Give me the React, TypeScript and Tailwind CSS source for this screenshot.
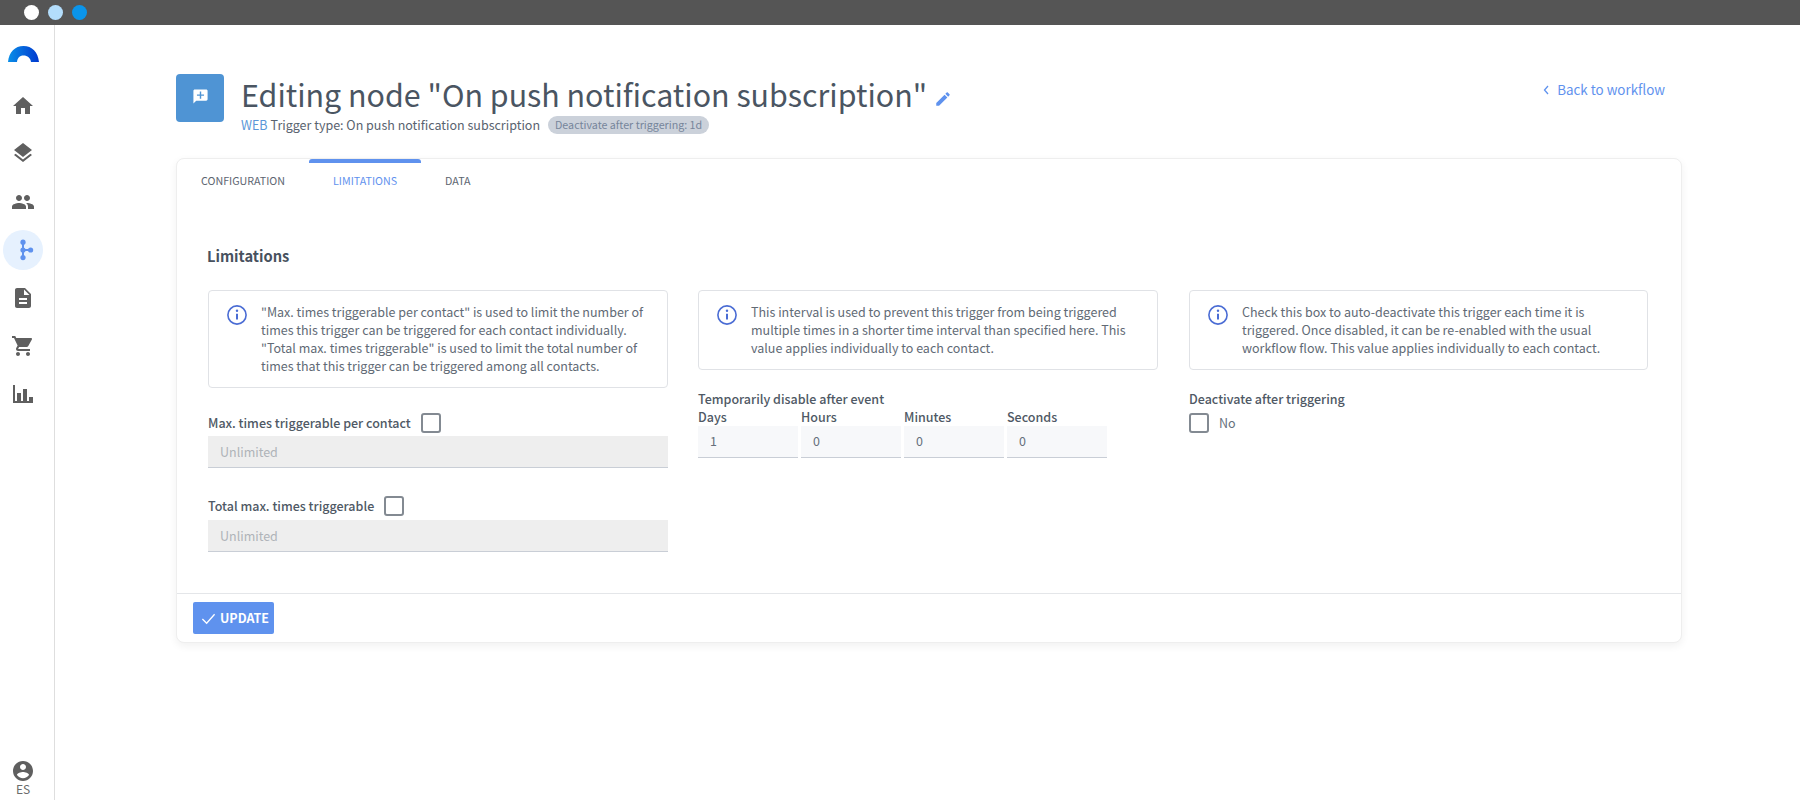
import React from "react";

const Icon = ({ d, className }: { d: string; className: string }) => (
  <svg viewBox="0 0 24 24" className={className} fill="currentColor">
    <path d={d} />
  </svg>
);

const icons = {
  home: "M10 20v-6h4v6h5v-8h3L12 3 2 12h3v8z",
  layers: "M11.99 18.54l-7.37-5.73L3 14.07l9 7 9-7-1.63-1.27-7.38 5.74zM12 16l7.36-5.73L21 9l-9-7-9 7 1.63 1.27L12 16z",
  people: "M16 11c1.66 0 2.99-1.34 2.99-3S17.66 5 16 5c-1.66 0-3 1.34-3 3s1.34 3 3 3zm-8 0c1.66 0 2.99-1.34 2.99-3S9.66 5 8 5C6.34 5 5 6.34 5 8s1.34 3 3 3zm0 2c-2.33 0-7 1.17-7 3.5V19h14v-2.5c0-2.33-4.67-3.5-7-3.5zm8 0c-.29 0-.62.02-.97.05 1.16.84 1.97 1.97 1.97 3.45V19h6v-2.5c0-2.33-4.67-3.5-7-3.5z",
  doc: "M14 2H6c-1.1 0-1.99.9-1.99 2L4 20c0 1.1.89 2 1.99 2H18c1.1 0 2-.9 2-2V8l-6-6zm2 16H8v-2h8v2zm0-4H8v-2h8v2zm-3-5V3.5L18.5 9H13z",
  cart: "M7 18c-1.1 0-1.99.9-1.99 2S5.9 22 7 22s2-.9 2-2-.9-2-2-2zM1 2v2h2l3.6 7.59-1.35 2.45c-.16.28-.25.61-.25.96 0 1.1.9 2 2 2h12v-2H7.42c-.14 0-.25-.11-.25-.25l.03-.12.9-1.63h7.45c.75 0 1.41-.41 1.75-1.03l3.58-6.49c.08-.14.12-.31.12-.48 0-.55-.45-1-1-1H5.21l-.94-2H1zm16 16c-1.1 0-1.99.9-1.99 2s.89 2 1.99 2 2-.9 2-2-.9-2-2-2z",
  chart: "M2 3h2v16h2v-8h4v8h2V7h4v12h2v-4h4v6H2z",
  account: "M12 2C6.48 2 2 6.48 2 12s4.48 10 10 10 10-4.48 10-10S17.52 2 12 2zm0 3c1.66 0 3 1.34 3 3s-1.34 3-3 3-3-1.34-3-3 1.34-3 3-3zm0 14.2c-2.5 0-4.71-1.28-6-3.22.03-1.99 4-3.08 6-3.08 1.99 0 5.97 1.09 6 3.08-1.29 1.94-3.5 3.22-6 3.22z",
  pencil: "M3 17.25V21h3.75L17.81 9.94l-3.75-3.75L3 17.25zM20.71 7.04c.39-.39.39-1.02 0-1.41l-2.34-2.34c-.39-.39-1.02-.39-1.41 0l-1.83 1.83 3.75 3.75 1.83-1.83z",
  comment: "M20 2H4c-1.1 0-2 .9-2 2v18l4-4h14c1.1 0 2-.9 2-2V4c0-1.1-.9-2-2-2zm-3 9h-4v4h-2v-4H7V9h4V5h2v4h4v2z",
};

const Info = ({ text, tall }: { text: string[]; tall?: boolean }) => (
  <div className={`flex border border-[#e0e2e6] rounded-[4px] pl-[18px] pr-2 pt-3 ${tall ? "h-[98px]" : "h-[80px]"}`}>
    <svg viewBox="0 0 20 20" className="w-5 h-5 mt-[2px] shrink-0 text-[#4a6cd4]" fill="none" stroke="currentColor" strokeWidth="1.6">
      <circle cx="10" cy="10" r="9.1" />
      <path d="M10 8.8v5.6" strokeWidth="2" />
      <circle cx="10" cy="5.8" r="1.2" fill="currentColor" stroke="none" />
    </svg>
    <div className="ml-[14px] text-[12.5px] leading-[18px] text-[#616a75] whitespace-nowrap">
      {text.map((t) => (
        <div key={t}>{t}</div>
      ))}
    </div>
  </div>
);

const Check = () => <span className="block w-5 h-5 border-2 border-[#838a92] rounded-[3px] bg-white shrink-0" />;

const Disabled = () => (
  <div className="h-8 bg-[#eeeeee] border-b border-[#c9ced6] pl-3 pt-[2px] flex items-center text-[12.5px] text-[#afb3b8]">Unlimited</div>
);

const Time = ({ label, value }: { label: string; value: string }) => (
  <div className="w-[100px]">
    <div className="h-[18px] leading-[18px] text-[12.5px] font-medium text-[#4f5965]">{label}</div>
    <div className="h-8 bg-[#f7f8fa] border-b border-[#c9ced6] pl-3 flex items-center text-[12.5px] text-[#66707c]">{value}</div>
  </div>
);

export default function App() {
  return (
    <div className="min-h-[800px] bg-white font-['Noto_Sans_CJK_SC','Liberation_Sans',sans-serif]">
      <div className="h-[25px] bg-[#555555] flex items-center pl-6 gap-[9px]">
        <span className="w-[15px] h-[15px] rounded-full bg-white" />
        <span className="w-[15px] h-[15px] rounded-full bg-[#b3ddfb]" />
        <span className="w-[15px] h-[15px] rounded-full bg-[#0a94ea]" />
      </div>
      <div className="flex h-[775px]">
        <aside className="w-[55px] shrink-0 border-r border-[#dedede] flex flex-col items-center pr-[8px] text-[#5f5f5f]">
          <svg viewBox="0 0 31 16" className="w-[31px] h-4 mt-[21px] shrink-0">
            <defs>
              <linearGradient id="lg" x1="0" x2="1" y1="0" y2="0">
                <stop offset="0" stopColor="#0a8fe8" />
                <stop offset="1" stopColor="#0038cf" />
              </linearGradient>
            </defs>
            <path d="M0 16C1 6 7 0 15.5 0S30 6 31 16H23C22.5 12 19.5 9.5 15.5 9.5S9.5 12 9 16Z" fill="url(#lg)" />
          </svg>
          <Icon d={icons.home} className="w-6 h-6 mt-8 shrink-0" />
          <Icon d={icons.layers} className="w-6 h-6 mt-[23px] shrink-0" />
          <Icon d={icons.people} className="w-6 h-6 mt-[25px] shrink-0" />
          <div className="w-10 h-10 rounded-full bg-[#e6f1fe] mt-4 flex items-center justify-center shrink-0">
            <svg viewBox="0 0 24 24" className="w-6 h-6 text-[#5f92ee]" fill="currentColor">
              <circle cx="12" cy="4.2" r="2.6" />
              <circle cx="12" cy="12" r="2.6" />
              <circle cx="12" cy="19.6" r="2.6" />
              <circle cx="19.6" cy="12" r="2.6" />
              <path d="M12 4v16M12 12h7" stroke="currentColor" strokeWidth="2" fill="none" />
            </svg>
          </div>
          <Icon d={icons.doc} className="w-6 h-6 mt-4 shrink-0" />
          <Icon d={icons.cart} className="w-6 h-6 mt-[24px] shrink-0" />
          <Icon d={icons.chart} className="w-6 h-6 mt-[24px] shrink-0" />
          <div className="mt-auto mb-[6px] flex flex-col items-center">
            <Icon d={icons.account} className="w-6 h-6" />
            <span className="text-[12px] leading-[11px] text-[#6b6b6b]">ES</span>
          </div>
        </aside>
        <main className="flex-1 pl-[121px] pt-[49px]">
          <div className="w-[1506px] flex justify-between h-[84px]">
            <div className="flex">
              <div className="w-12 h-12 rounded-[4px] bg-[#4f94d4] flex items-center justify-center text-white">
                <Icon d={icons.comment} className="w-[17px] h-[17px] mb-1" />
              </div>
              <div className="ml-[17px]">
                <div className="flex items-center h-[40px]">
                  <h1 className="text-[30.4px] leading-[42px] font-normal text-[#4a5562] whitespace-nowrap">Editing node "On push notification subscription"</h1>
                  <Icon d={icons.pencil} className="w-[18px] h-[18px] ml-[7px] mt-[9px] text-[#5f92ee]" />
                </div>
                <div className="flex items-center h-[18px] mt-[2px] text-[12.5px] text-[#59636f] whitespace-nowrap">
                  <span className="text-[#5b97d8]">WEB</span>
                  <span className="ml-[3px]">Trigger type: On push notification subscription</span>
                  <span className="ml-2 h-[18px] px-[7px] rounded-full bg-[#cbd1da] text-[10.7px] leading-[18px] text-[#76859a]">Deactivate after triggering: 1d</span>
                </div>
              </div>
            </div>
            <div className="flex items-start text-[13.4px] text-[#5f92ee] mr-[17px] mt-[5px]">
              <svg viewBox="0 0 8 12" className="w-2 h-3 mt-[5px] mr-[7px]" fill="none" stroke="currentColor" strokeWidth="1.3">
                <path d="M6 2 2.5 6 6 10" />
              </svg>
              <span>Back to workflow</span>
            </div>
          </div>
          <div className="w-[1506px] h-[485px] bg-white border border-[#eeeeee] rounded-[8px] shadow-[0_3px_8px_rgba(0,0,0,0.06)] flex flex-col">
            <div className="flex h-[42px] text-[10.7px] uppercase text-[#5d6570] leading-[44px]">
              <div className="px-6">Configuration</div>
              <div className="px-6 text-[#5f92ee] border-t-4 border-[#5f92ee] rounded-t-[3px] leading-[36px]">Limitations</div>
              <div className="px-6">Data</div>
            </div>
            <div className="flex-1 px-[31px]">
              <h2 className="mt-[43px] -ml-px text-[14.7px] leading-6 font-semibold text-[#47515e]">Limitations</h2>
              <div className="grid grid-cols-[460px_460px_460px] gap-[30px] mt-[22px]">
                <div>
                  <Info
                    tall
                    text={[
                      '"Max. times triggerable per contact" is used to limit the number of',
                      "times this trigger can be triggered for each contact individually.",
                      '"Total max. times triggerable" is used to limit the total number of',
                      "times that this trigger can be triggered among all contacts.",
                    ]}
                  />
                  <div className="flex items-center h-5 mt-[25px] text-[12.5px] font-medium text-[#4f5965]">
                    <span>Max. times triggerable per contact</span>
                    <span className="ml-[10px]"><Check /></span>
                  </div>
                  <div className="mt-[3px]"><Disabled /></div>
                  <div className="flex items-center h-5 mt-[28px] text-[12.5px] font-medium text-[#4f5965]">
                    <span>Total max. times triggerable</span>
                    <span className="ml-[10px]"><Check /></span>
                  </div>
                  <div className="mt-1"><Disabled /></div>
                </div>
                <div>
                  <Info
                    text={[
                      "This interval is used to prevent this trigger from being triggered",
                      "multiple times in a shorter time interval than specified here. This",
                      "value applies individually to each contact.",
                    ]}
                  />
                  <div className="mt-5 h-[18px] leading-[18px] text-[12.5px] font-medium text-[#4f5965]">Temporarily disable after event</div>
                  <div className="flex gap-[3px]">
                    <Time label="Days" value="1" />
                    <Time label="Hours" value="0" />
                    <Time label="Minutes" value="0" />
                    <Time label="Seconds" value="0" />
                  </div>
                </div>
                <div className="ml-px">
                  <Info
                    text={[
                      "Check this box to auto-deactivate this trigger each time it is",
                      "triggered. Once disabled, it can be re-enabled with the usual",
                      "workflow flow. This value applies individually to each contact.",
                    ]}
                  />
                  <div className="mt-5 h-[18px] leading-[18px] text-[12.5px] font-medium text-[#4f5965]">Deactivate after triggering</div>
                  <div className="flex items-center mt-[5px] h-5 text-[12.5px] text-[#66707c]">
                    <Check />
                    <span className="ml-[10px]">No</span>
                  </div>
                </div>
              </div>
            </div>
            <div className="h-[49px] border-t border-[#e4e6e9] pt-2 pl-4">
              <div className="w-[81px] h-8 rounded-[2px] bg-[#5f92ee] text-white flex items-center pl-2 text-[12.5px] font-bold">
                <svg viewBox="0 0 16 16" className="w-[15px] h-[15px] mr-[4px]" fill="none" stroke="currentColor" strokeWidth="1.4">
                  <path d="M1.5 8.5 6 13l8.5-9.5" />
                </svg>
                UPDATE
              </div>
            </div>
          </div>
        </main>
      </div>
    </div>
  );
}
